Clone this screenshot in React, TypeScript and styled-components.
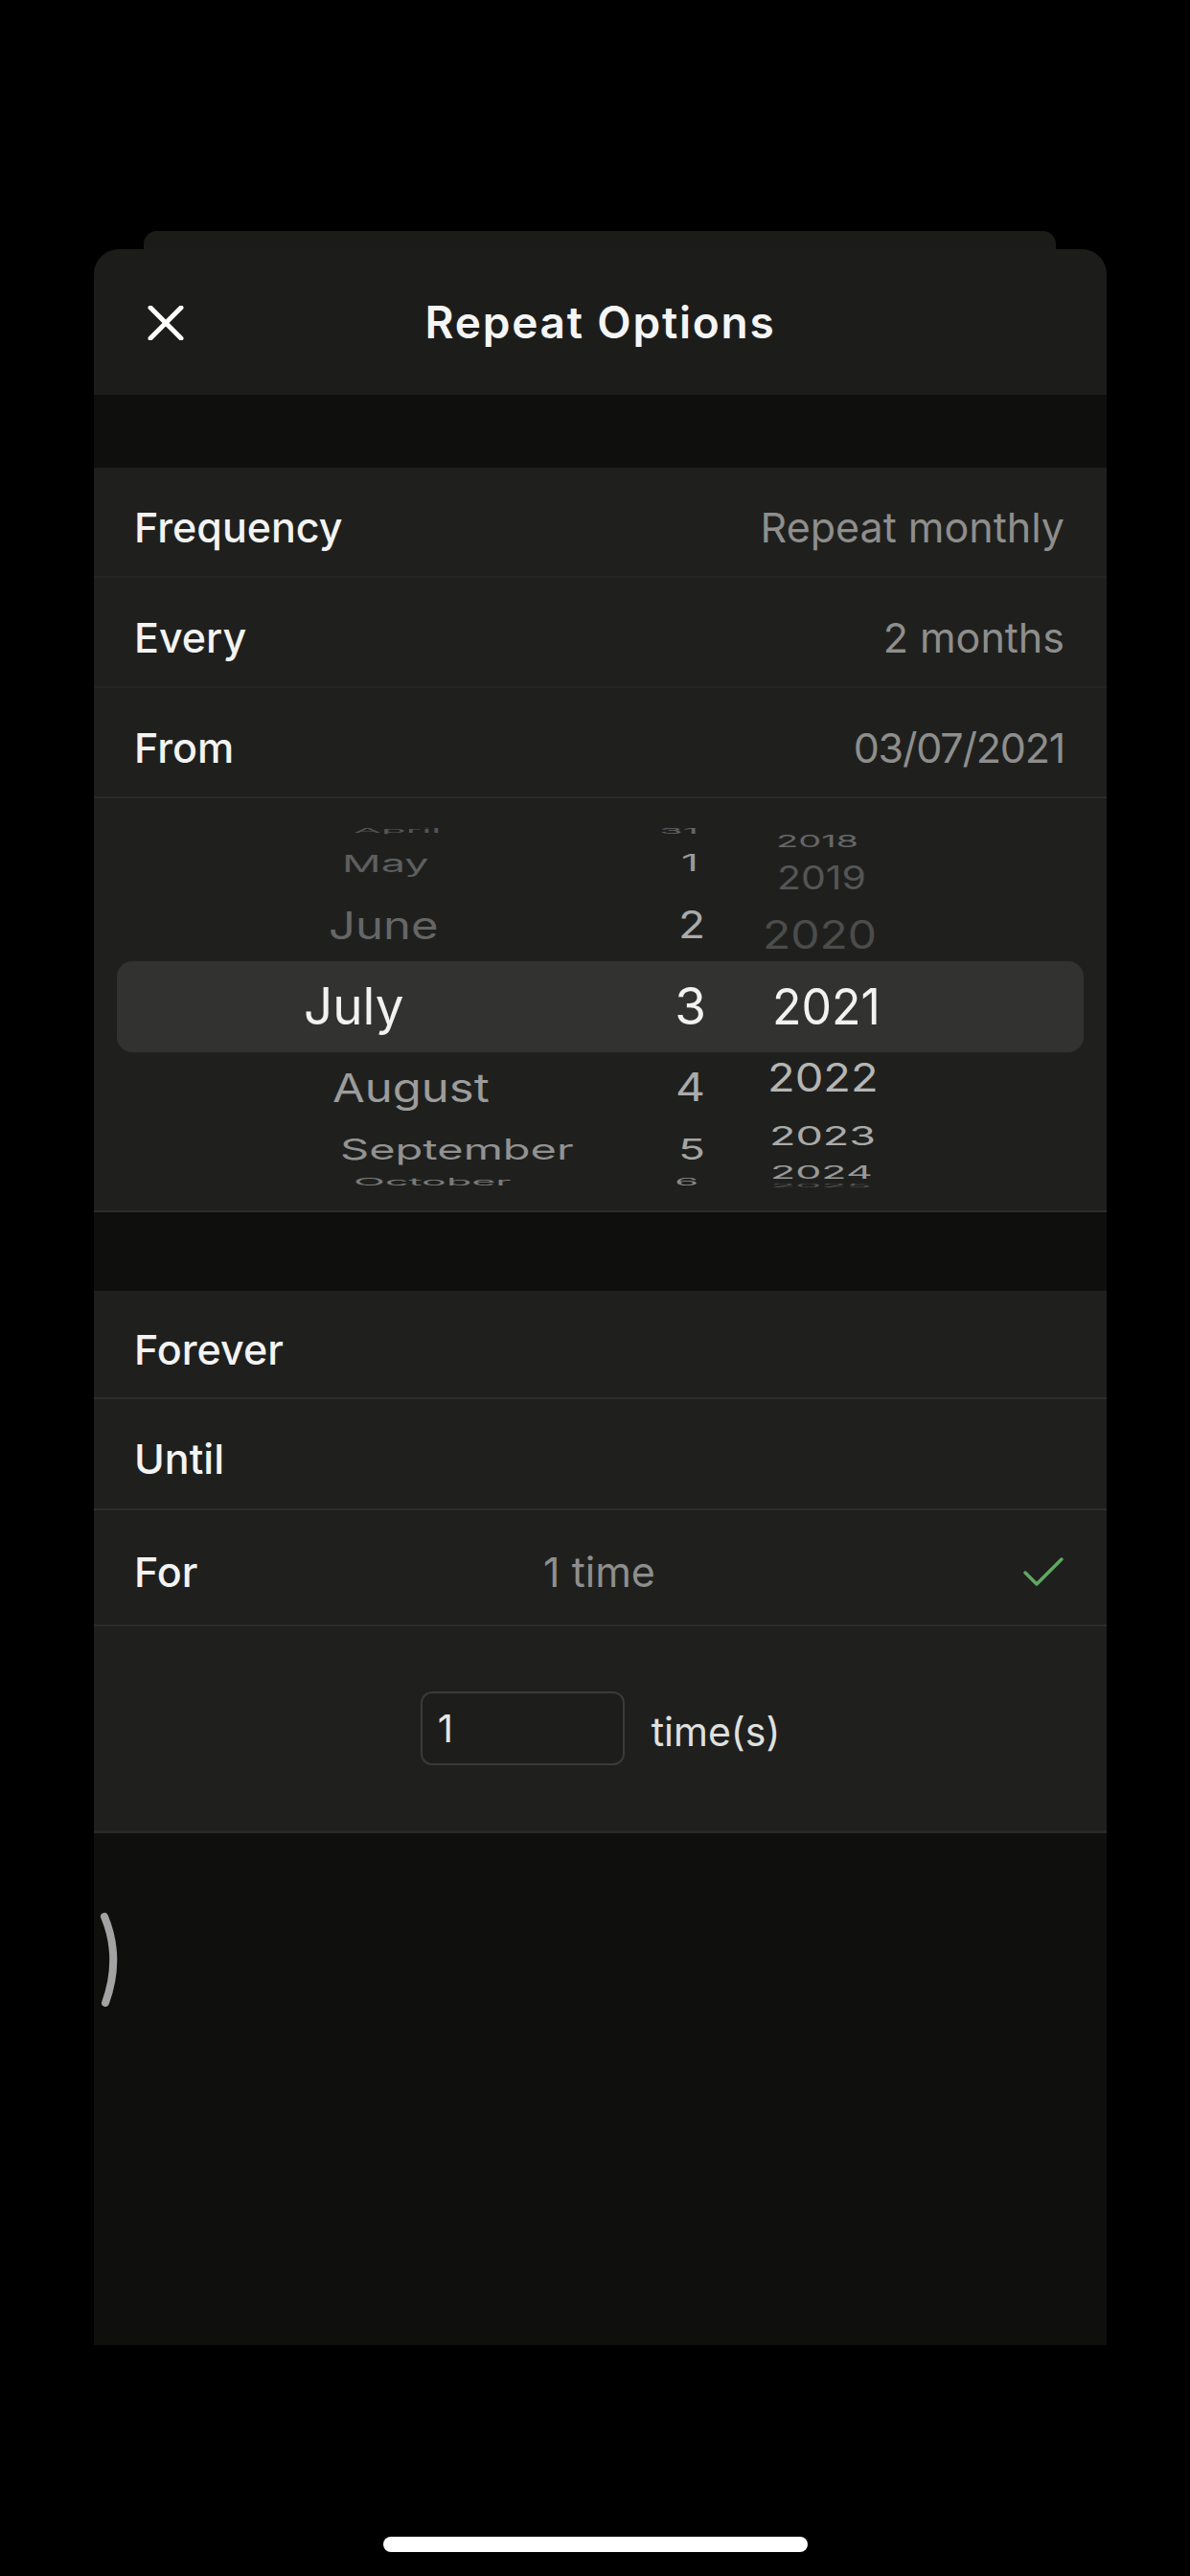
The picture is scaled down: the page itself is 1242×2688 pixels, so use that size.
import React from "react";
import styled, { createGlobalStyle } from "styled-components";

const GlobalStyle = createGlobalStyle`
  html, body { margin: 0; padding: 0; background: #000; }
  body { font-family: Inter, "Noto Sans", sans-serif; -webkit-font-smoothing: antialiased; }
  * { box-sizing: border-box; }
`;

const Page = styled.div`
  width: 1242px;
  height: 2688px;
  background: #000;
  display: flex;
  flex-direction: column;
  overflow: hidden;
`;

const Sheet = styled.div`
  position: relative;
  margin: 260px 0 0 98px;
  width: 1057px;
  display: flex;
  flex-direction: column;
  &::before {
    content: "";
    position: absolute;
    top: -19px;
    left: 52px;
    right: 53px;
    height: 40px;
    background: #1b1c1a;
    border-radius: 14px 14px 0 0;
  }
`;

const Header = styled.div`
  position: relative;
  height: 152px;
  background: #1c1d1b;
  border-radius: 26px 26px 0 0;
  display: grid;
  grid-template-columns: 1fr auto 1fr;
  align-items: center;
  padding: 0 56px;
`;

const CloseButton = styled.button`
  justify-self: start;
  width: 38px;
  height: 38px;
  padding: 0;
  border: none;
  background: transparent;
  display: flex;
  align-items: center;
  justify-content: center;
  margin-top: 2px;
`;

const Title = styled.h1`
  margin: 0;
  font-size: 46px;
  font-weight: 600;
  letter-spacing: 1.8px;
  color: #f5f5f5;
`;

const Band = styled.div<{ $h: number }>`
  height: ${(p) => p.$h}px;
  background: #0f0f0d;
`;

const Group = styled.div`
  background: #1f201e;
  display: flex;
  flex-direction: column;
`;

const Row = styled.div<{ $h: number; $line?: string }>`
  height: ${(p) => p.$h}px;
  display: flex;
  align-items: center;
  justify-content: space-between;
  padding: 10px 44px 0 42px;
  border-bottom: 2px solid ${(p) => p.$line || "#242523"};
`;

const ForRow = styled.div`
  height: 121px;
  display: grid;
  grid-template-columns: 1fr auto 1fr;
  align-items: center;
  padding: 8px 44px 0 42px;
  border-bottom: 2px solid #2c2d2b;
`;

const Label = styled.span`
  font-size: 43px;
  font-weight: 500;
  color: #f3f3f3;
`;

const Value = styled.span<{ $tight?: boolean }>`
  font-size: 43px;
  font-weight: 400;
  color: #8e8e8c;
  letter-spacing: ${(p) => (p.$tight ? "-1.2px" : "0")};
`;

const Check = styled.svg`
  justify-self: end;
`;

const Picker = styled.div`
  position: relative;
  height: 432px;
  background: #1f201e;
  border-bottom: 2px solid #2b2c2a;
  display: flex;
  overflow: hidden;
`;

const Highlight = styled.div`
  position: absolute;
  left: 24px;
  right: 24px;
  top: 170px;
  height: 95px;
  border-radius: 16px;
  background: #323331;
`;

const Column = styled.div<{ $top: number; $w: number; $ml: number; $align: string }>`
  position: relative;
  display: flex;
  flex-direction: column;
  padding-top: ${(p) => p.$top}px;
  width: ${(p) => p.$w}px;
  margin-left: ${(p) => p.$ml}px;
  align-items: ${(p) => p.$align};
`;

const Item = styled.div<{ $h: number; $size: number; $sy: number; $color: string; $off: number; $right?: boolean }>`
  height: ${(p) => p.$h}px;
  display: flex;
  align-items: center;
  font-size: ${(p) => p.$size}px;
  line-height: 1;
  color: ${(p) => p.$color};
  white-space: nowrap;
  ${(p) => (p.$right ? `padding-right: ${p.$off}px;` : `padding-left: ${p.$off}px;`)}
  & > span {
    display: inline-block;
    transform: scaleY(${(p) => p.$sy});
  }
`;

const InputArea = styled.div`
  height: 213px;
  display: flex;
  justify-content: center;
  align-items: flex-start;
  gap: 28px;
  padding-top: 68px;
`;

const CountInput = styled.input`
  width: 213px;
  height: 77px;
  border: 2px solid #3a3b39;
  border-radius: 12px;
  background: #1d1e1c;
  color: #e6e6e6;
  font-family: Inter, "Noto Sans", sans-serif;
  font-size: 40px;
  padding: 0 0 0 16px;
  outline: none;
`;

const Unit = styled.span`
  font-size: 41px;
  color: #e0e0e0;
  line-height: 77px;
  margin-top: 4px;
`;

const Lower = styled.div`
  height: 537px;
  background: #0f100e;
  border-top: 3px solid #282927;
  padding: 82px 0 0 5px;
`;

const HomeIndicator = styled.div`
  margin: 200px auto 0;
  width: 443px;
  height: 16px;
  border-radius: 8px;
  background: #fff;
`;

type P = { t: string; h: number; size: number; sy: number; c: string; off: number };

const months: P[] = [
  { t: "April", h: 24, size: 42, sy: 0.15, c: "#555", off: 52 },
  { t: "May", h: 42, size: 45, sy: 0.55, c: "#5e5e5e", off: 40 },
  { t: "June", h: 88, size: 49, sy: 0.8, c: "#666", off: 26 },
  { t: "July", h: 82, size: 53, sy: 1, c: "#f2f2f2", off: 0 },
  { t: "August", h: 88, size: 49, sy: 0.84, c: "#9c9c9c", off: 30 },
  { t: "September", h: 40, size: 47, sy: 0.62, c: "#929292", off: 38 },
  { t: "October", h: 28, size: 43, sy: 0.24, c: "#7a7a7a", off: 52 },
];

const days: P[] = [
  { t: "31", h: 24, size: 40, sy: 0.2, c: "#666", off: 8 },
  { t: "1", h: 42, size: 44, sy: 0.55, c: "#9a9a9a", off: 8 },
  { t: "2", h: 88, size: 46, sy: 0.85, c: "#aaa", off: 1 },
  { t: "3", h: 82, size: 53, sy: 1, c: "#f2f2f2", off: 0 },
  { t: "4", h: 88, size: 48, sy: 0.85, c: "#aaa", off: 1 },
  { t: "5", h: 40, size: 46, sy: 0.65, c: "#a5a5a5", off: 1 },
  { t: "6", h: 28, size: 40, sy: 0.25, c: "#888", off: 8 },
];

const years: P[] = [
  { t: "2018", h: 24, size: 38, sy: 0.47, c: "#666", off: 14 },
  { t: "2019", h: 52, size: 41, sy: 0.83, c: "#555", off: 15 },
  { t: "2020", h: 68, size: 48, sy: 0.86, c: "#4c4c4c", off: 0 },
  { t: "2021", h: 82, size: 50, sy: 1.05, c: "#f2f2f2", off: 10 },
  { t: "2022", h: 64, size: 47, sy: 0.88, c: "#b5b5b5", off: 5 },
  { t: "2023", h: 60, size: 45, sy: 0.6, c: "#aaa", off: 7 },
  { t: "2024", h: 16, size: 43, sy: 0.42, c: "#999", off: 8 },
  { t: "2025", h: 12, size: 43, sy: 0.1, c: "#555", off: 8 },
];

const renderItems = (list: P[], right?: boolean) =>
  list.map((it) => (
    <Item key={it.t} $h={it.h} $size={it.size} $sy={it.sy} $color={it.c} $off={it.off} $right={right}>
      <span>{it.t}</span>
    </Item>
  ));

export default function App() {
  return (
    <>
      <GlobalStyle />
      <Page>
        <Sheet>
          <Header>
            <CloseButton aria-label="Close">
              <svg width="38" height="36" viewBox="0 0 38 36">
                <path d="M3 2 L35 34 M35 2 L3 34" stroke="#fff" strokeWidth="5" strokeLinecap="round" />
              </svg>
            </CloseButton>
            <Title>Repeat Options</Title>
            <div />
          </Header>
          <Band $h={76} />
          <Group>
            <Row $h={115}>
              <Label>Frequency</Label>
              <Value>Repeat monthly</Value>
            </Row>
            <Row $h={115}>
              <Label>Every</Label>
              <Value>2 months</Value>
            </Row>
            <Row $h={115} $line="#2a2b29">
              <Label>From</Label>
              <Value $tight>03/07/2021</Value>
            </Row>
            <Picker>
              <Highlight />
              <Column $top={22} $w={380} $ml={219} $align="flex-start">
                {renderItems(months)}
              </Column>
              <Column $top={22} $w={40} $ml={0} $align="flex-end">
                {renderItems(days, true)}
              </Column>
              <Column $top={32} $w={220} $ml={59} $align="flex-start">
                {renderItems(years)}
              </Column>
            </Picker>
          </Group>
          <Band $h={82} />
          <Group>
            <Row $h={113} $line="#2c2d2b">
              <Label>Forever</Label>
            </Row>
            <Row $h={116} $line="#2c2d2b">
              <Label>Until</Label>
            </Row>
            <ForRow>
              <Label>For</Label>
              <Value>1 time</Value>
              <Check width="44" height="32" viewBox="0 0 44 32">
                <path d="M3 17 L15 29 L41 3" fill="none" stroke="#5fa863" strokeWidth="3.5" strokeLinecap="round" strokeLinejoin="round" />
              </Check>
            </ForRow>
            <InputArea>
              <CountInput defaultValue="1" />
              <Unit>time(s)</Unit>
            </InputArea>
          </Group>
          <Lower>
            <svg width="24" height="100" viewBox="0 0 24 100">
              <path d="M6 5 Q24 48 7 95" fill="none" stroke="#a3a3a3" strokeWidth="8" strokeLinecap="round" />
            </svg>
          </Lower>
        </Sheet>
        <HomeIndicator />
      </Page>
    </>
  );
}
